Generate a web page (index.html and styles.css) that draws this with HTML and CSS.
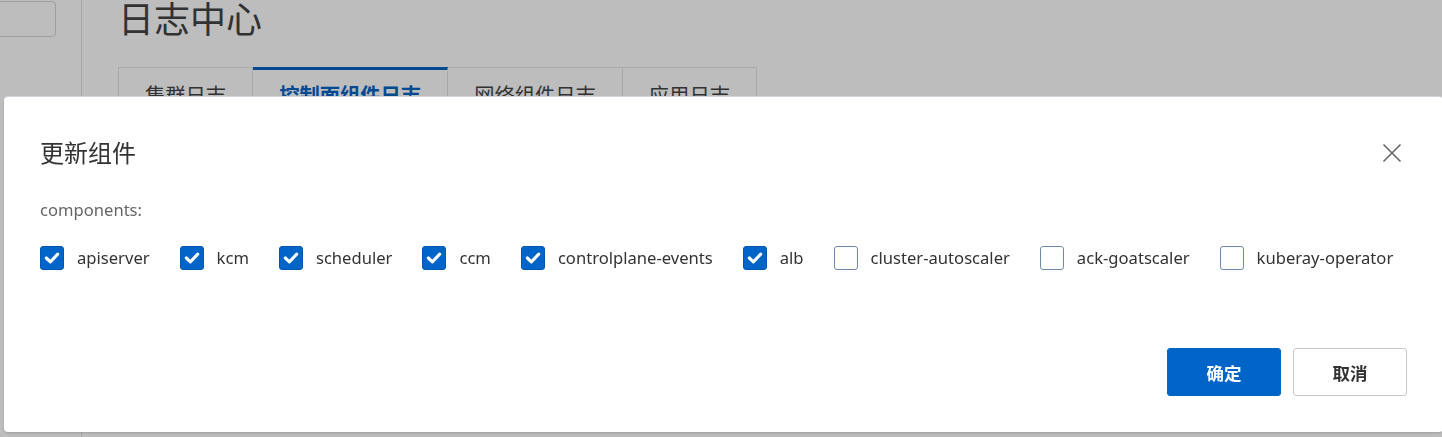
FILE: index.html
```html
<!DOCTYPE html>
<html lang="zh-CN">
<head>
<meta charset="utf-8">
<title>日志中心 - 更新组件</title>
<link rel="stylesheet" href="styles.css">
</head>
<body>
<div class="page">
  <aside class="sidebar">
    <div class="search"></div>
  </aside>
  <main class="main">
    <h1 class="page-title">日志中心</h1>
    <div class="tabs">
      <div class="tab">集群日志</div>
      <div class="tab active">控制面组件日志</div>
      <div class="tab">网络组件日志</div>
      <div class="tab">应用日志</div>
    </div>
    <div class="tab-panel"></div>
  </main>
</div>

<div class="mask"></div>

<div class="dialog" role="dialog" aria-label="更新组件">
  <div class="dialog-header">
    <h2 class="dialog-title">更新组件</h2>
    <button class="close" aria-label="关闭">
      <svg width="24" height="24" viewBox="0 0 24 24"><path d="M3.5 3.5 L20.5 20.5 M20.5 3.5 L3.5 20.5" stroke="#666" stroke-width="1.6" fill="none"/></svg>
    </button>
  </div>
  <div class="field-label">components:</div>
  <div class="checks">
    <label class="check"><span class="box on"><svg viewBox="0 0 24 24"><path d="M5.8 12 L10.2 16.2 L18.2 7.8" stroke="#fff" stroke-width="3.4" fill="none" stroke-linecap="round" stroke-linejoin="round"/></svg></span><span class="text">apiserver</span></label>
    <label class="check"><span class="box on"><svg viewBox="0 0 24 24"><path d="M5.8 12 L10.2 16.2 L18.2 7.8" stroke="#fff" stroke-width="3.4" fill="none" stroke-linecap="round" stroke-linejoin="round"/></svg></span><span class="text">kcm</span></label>
    <label class="check"><span class="box on"><svg viewBox="0 0 24 24"><path d="M5.8 12 L10.2 16.2 L18.2 7.8" stroke="#fff" stroke-width="3.4" fill="none" stroke-linecap="round" stroke-linejoin="round"/></svg></span><span class="text">scheduler</span></label>
    <label class="check"><span class="box on"><svg viewBox="0 0 24 24"><path d="M5.8 12 L10.2 16.2 L18.2 7.8" stroke="#fff" stroke-width="3.4" fill="none" stroke-linecap="round" stroke-linejoin="round"/></svg></span><span class="text">ccm</span></label>
    <label class="check"><span class="box on"><svg viewBox="0 0 24 24"><path d="M5.8 12 L10.2 16.2 L18.2 7.8" stroke="#fff" stroke-width="3.4" fill="none" stroke-linecap="round" stroke-linejoin="round"/></svg></span><span class="text">controlplane-events</span></label>
    <label class="check"><span class="box on"><svg viewBox="0 0 24 24"><path d="M5.8 12 L10.2 16.2 L18.2 7.8" stroke="#fff" stroke-width="3.4" fill="none" stroke-linecap="round" stroke-linejoin="round"/></svg></span><span class="text">alb</span></label>
    <label class="check"><span class="box"></span><span class="text">cluster-autoscaler</span></label>
    <label class="check"><span class="box"></span><span class="text">ack-goatscaler</span></label>
    <label class="check"><span class="box"></span><span class="text">kuberay-operator</span></label>
  </div>
  <div class="footer">
    <button class="btn primary">确定</button>
    <button class="btn">取消</button>
  </div>
</div>
</body>
</html>
```
FILE: styles.css
```css
* { box-sizing: border-box; }

html, body {
  margin: 0;
  padding: 0;
  width: 1442px;
  height: 437px;
  overflow: hidden;
  background: #fff;
  font-family: "Noto Sans", "Noto Sans CJK SC", sans-serif;
}

/* ---------- background page ---------- */
.page {
  display: flex;
  height: 437px;
}

.sidebar {
  width: 82px;
  flex: none;
  border-right: 1px solid #e3e3e3;
  padding-top: 1px;
}

.search {
  width: 63px;
  height: 36px;
  margin-left: -7px;
  border: 1px solid #d6d6d6;
  border-radius: 4px;
}

.main {
  flex: 1;
  padding-left: 36px;
}

.page-title {
  margin: 0;
  font-size: 36px;
  line-height: 40px;
  font-weight: 400;
  color: #444;
}

.tabs {
  display: flex;
  margin-top: 27px;
}

.tab {
  padding: 12px 26px 0;
  height: 60px;
  font-size: 20.3px;
  line-height: 30px;
  color: #444;
  border: 1px solid #e4e4e4;
  border-bottom: none;
  border-left: none;
}

.tab:first-child { border-left: 1px solid #e4e4e4; }

.tab.active {
  color: #0064c8;
  font-weight: 700;
  border-top: 3px solid #0064c8;
  padding-top: 10px;
}

/* ---------- mask ---------- */
.mask {
  position: fixed;
  inset: 0;
  background: rgba(0, 0, 0, 0.26);
}

/* ---------- dialog ---------- */
.dialog {
  position: fixed;
  left: 4px;
  top: 97px;
  width: 1439px;
  background: #fff;
  border-radius: 4px;
  padding: 40px 36px 36px;
  box-shadow: 0 -1px 0 #cfd3da, 0 1px 3px rgba(0, 0, 0, 0.18);
}

.dialog-header {
  display: flex;
  align-items: center;
  justify-content: space-between;
  height: 32px;
}

.dialog-title {
  margin: 0;
  font-size: 24px;
  line-height: 32px;
  font-weight: 400;
  color: #333;
}

.close {
  width: 24px;
  height: 24px;
  padding: 0;
  margin-right: 3px;
  border: none;
  background: none;
  display: flex;
}

.field-label {
  margin-top: 31px;
  font-size: 16.6px;
  line-height: 20px;
  color: #666;
}

.checks {
  display: flex;
  gap: 30px;
  margin-top: 26px;
  height: 24px;
  align-items: center;
}

.check {
  display: flex;
  align-items: center;
  gap: 13px;
}

.box {
  width: 24px;
  height: 24px;
  border-radius: 3px;
  border: 1px solid #6f89ab;
  background: #fff;
  display: flex;
}

.box.on {
  background: #0064c8;
  border-color: #0058b0;
}

.box svg { width: 22px; height: 22px; }

.text {
  font-size: 16.6px;
  line-height: 24px;
  color: #333;
}

.footer {
  display: flex;
  justify-content: flex-end;
  gap: 12px;
  margin-top: 78px;
}

.btn {
  width: 114px;
  height: 48px;
  border-radius: 3px;
  border: 1px solid #c8c8c8;
  background: #fff;
  color: #333;
  font-family: "Noto Sans CJK SC", sans-serif;
  font-size: 17.5px;
  font-weight: 700;
  padding: 0;
}

.btn.primary {
  background: #0064c8;
  border-color: #0064c8;
  color: #fff;
}
```
